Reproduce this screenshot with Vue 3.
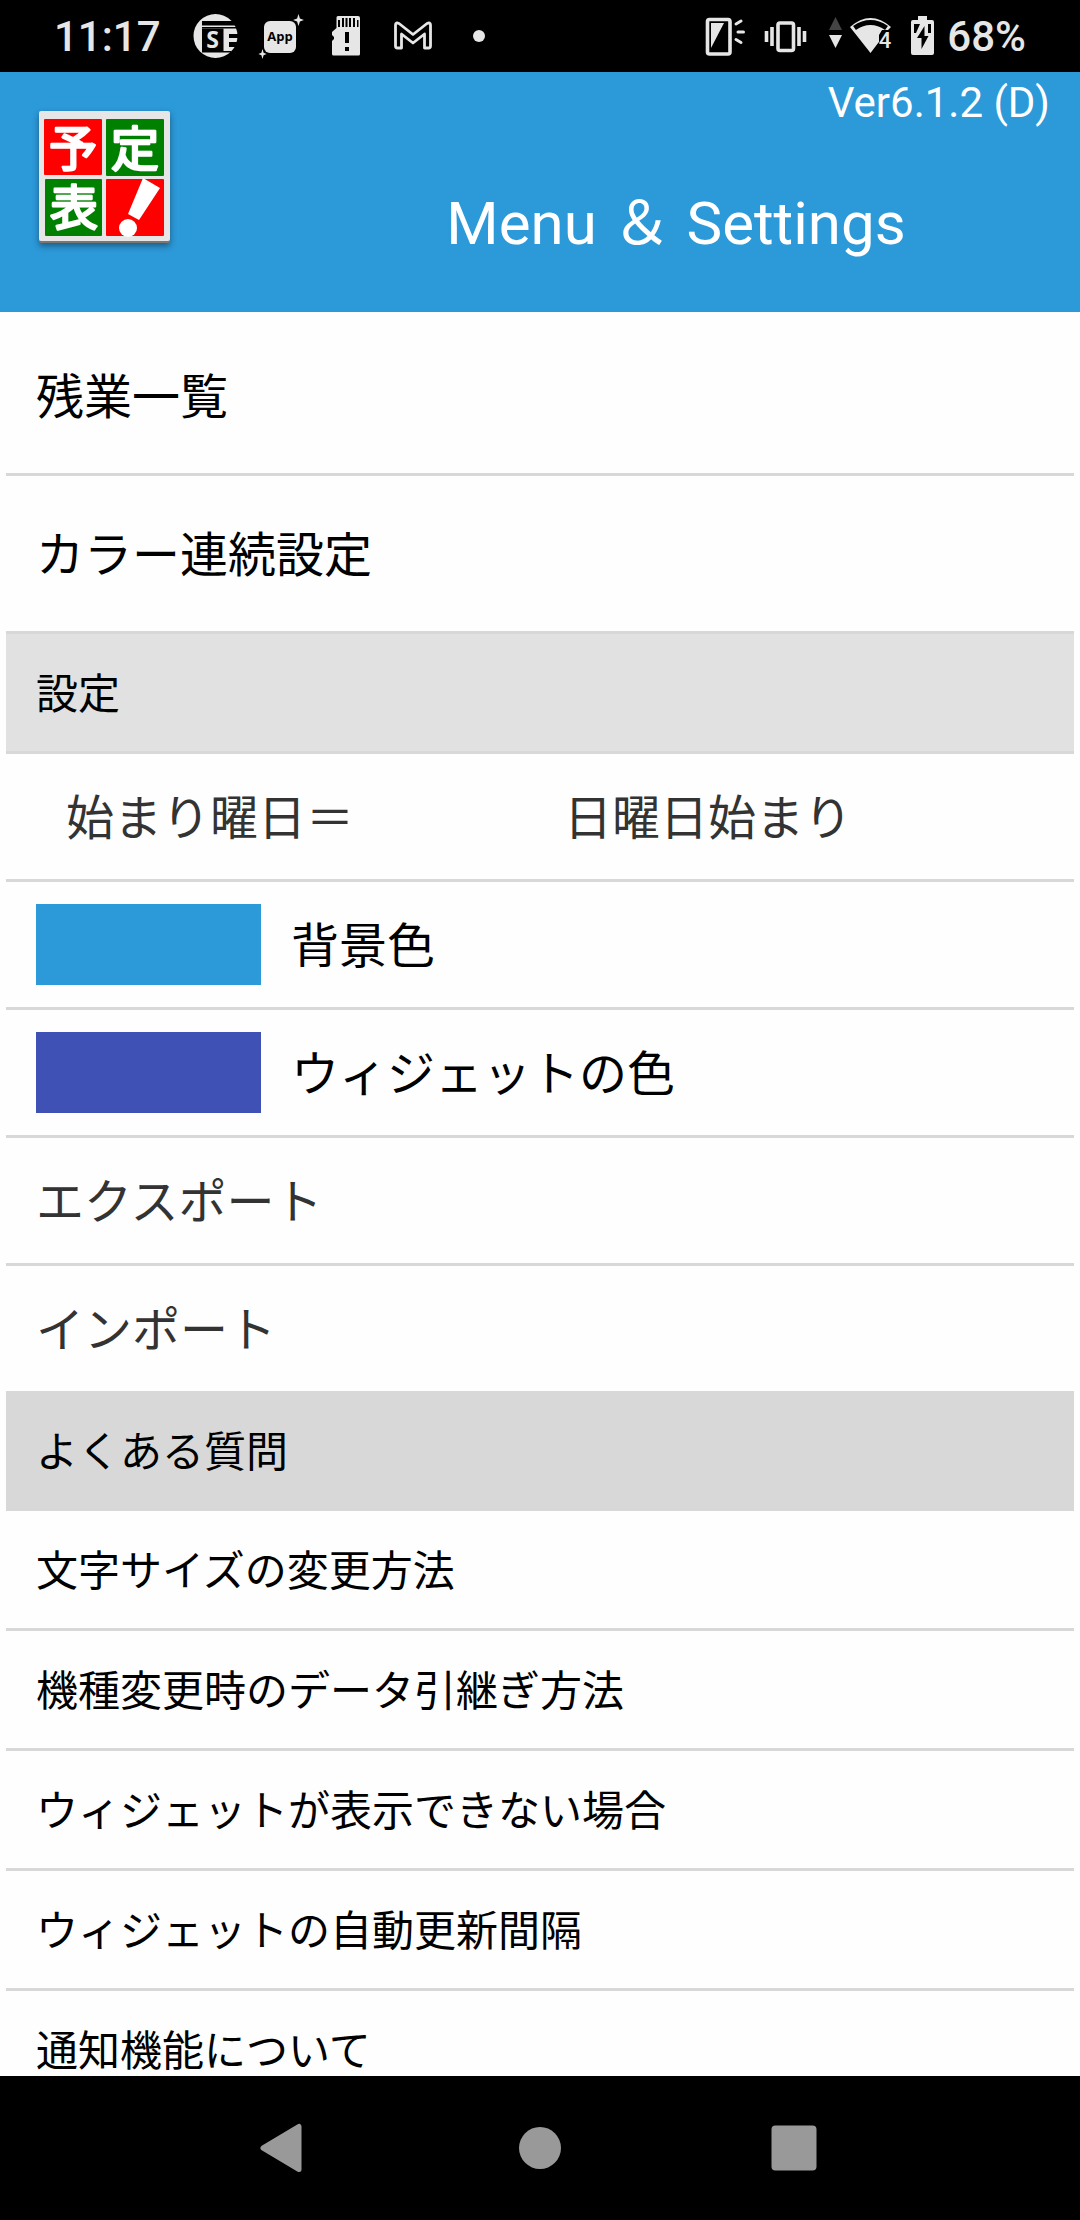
<script setup>
import { ref } from 'vue'

const shortcuts = ['残業一覧', 'カラー連続設定']

const weekStart = ref('日曜日始まり')
const weekStarts = ['日曜日始まり', '月曜日始まり']

const colors = [
  { name: '背景色', value: '#2c99d9' },
  { name: 'ウィジェットの色', value: '#3f51b5' },
]

const transfers = ['エクスポート', 'インポート']

const questions = [
  '文字サイズの変更方法',
  '機種変更時のデータ引継ぎ方法',
  'ウィジェットが表示できない場合',
  'ウィジェットの自動更新間隔',
  '通知機能について',
]
</script>

<template>
  <div class="screen">
    <div class="status">
      <span class="time">11:17</span>
      <svg width="66" height="72" viewBox="183 0 66 72" aria-hidden="true">
        <circle cx="215.500" cy="36" r="22" fill="#e6e6e6" />
        <path d="M202 21h33v4.500h-33zM202 27h36v1.500h-36zM229 34h13v4h-13zM229 42h13v5h-13zM202 51h29v1.500h-29zM237 20h5v8h-5z" fill="#000" />
        <rect x="202" y="28.500" width="21.500" height="22.500" fill="#000" />
        <text x="212.500" y="48" class="glyph" font-size="23" text-anchor="middle" fill="#e6e6e6">S</text>
      </svg>
      <svg width="66" height="72" viewBox="249 0 66 72" aria-hidden="true">
        <rect x="264" y="21" width="32" height="32" rx="6" fill="#e6e6e6" />
        <path d="M298.500 14l1.400 4.600 4 1.400-4 1.400-1.400 4.600-1.400-4.600-4-1.400 4-1.400zM262.500 49l1.100 3.800 3 1.200-3 1.200-1.100 3.800-1.100-3.800-3-1.200 3-1.200z" fill="#e6e6e6" />
        <text x="280" y="41" class="glyph" font-size="13" text-anchor="middle" fill="#000">App</text>
      </svg>
      <svg width="66" height="72" viewBox="315 0 66 72" aria-hidden="true">
        <path d="M338 16h20q2 0 2 2v36q0 1.500-1.500 1.500h-25q-1.500 0-1.500-1.500V41l2-2v-2l-2-2v-3l4.500-4V17.500q0-1.500 1.500-1.500z" fill="#e6e6e6" />
        <path d="M338 20h2v7h-2zM342 18h2v9h-2zM345.500 18h2v9h-2zM349 18h2v9h-2zM353 18h2v9h-2zM357 20h1.500v7H357zM345 32h4v11h-4zM345 47h4v4h-4z" fill="#000" />
      </svg>
      <svg width="66" height="72" viewBox="381 0 66 72" aria-hidden="true">
        <path d="M395.500 46V25q0-3 3.500-1.500L413 34.500 427 23.500q3.500-1.500 3.500 1.500v21q0 2-2 2h-4V34L413 43l-11.500-9v14h-4q-2 0-2-2z" fill="none" stroke="#e6e6e6" stroke-width="2.800" stroke-linejoin="round" />
      </svg>
      <svg width="66" height="72" viewBox="447 0 66 72" aria-hidden="true">
        <circle cx="479" cy="36" r="6" fill="#e6e6e6" />
      </svg>

      <span class="spacer"></span>

      <svg width="54" height="72" viewBox="700 0 54 72" aria-hidden="true">
        <rect x="708.500" y="19.500" width="22.500" height="34.500" rx="2" fill="none" stroke="#e6e6e6" stroke-width="3.600" />
        <path d="M712 23h13l-13 25z" fill="#e6e6e6" />
        <path d="M737 24l5-3M739 32h5.500M737 39.500l5 3" fill="none" stroke="#e6e6e6" stroke-width="3" stroke-linecap="round" />
      </svg>
      <svg width="64" height="72" viewBox="754 0 64 72" aria-hidden="true">
        <rect x="779" y="23" width="15.500" height="27.500" rx="2" fill="none" stroke="#e6e6e6" stroke-width="3.600" />
        <path d="M767.500 31v11M773 27v19M800 27v19M805.500 31v11" stroke="#e6e6e6" stroke-width="3.600" />
      </svg>
      <svg width="84" height="72" viewBox="818 0 84 72" aria-hidden="true">
        <path d="M830 30l6.500-13 6.500 13z" fill="#444" />
        <path d="M830 35l6.500 13 6.500-13z" fill="#e6e6e6" />
        <path d="M851 27Q871.500 9 892 27l-3 3-17.500 23z" fill="#e6e6e6" />
        <path d="M855.500 28Q871.500 17 887.500 28" fill="none" stroke="#000" stroke-width="5" />
        <path d="M883 30h11l-1 22h-17l4-7V35z" fill="#000" />
        <text x="886" y="48" class="digit" font-size="22" text-anchor="middle" fill="#e6e6e6">4</text>
      </svg>
      <svg width="46" height="72" viewBox="902 0 46 72" aria-hidden="true">
        <path d="M919 16h9v4h5q2 0 2 2v31q0 2-2 2h-19q-2 0-2-2V22q0-2 2-2h5z" fill="#e6e6e6" />
        <path d="M915 24h6l-4 9h-2zM929 24h3v9h-3zM925.500 26v10h4l-7 13v-11h-4.500z" fill="#000" />
      </svg>
      <span>68%</span>
    </div>

    <header class="header">
      <svg class="logo" width="144" height="144" viewBox="0 0 144 144" role="img" aria-label="予定表">
        <rect x="7" y="8" width="131" height="131" rx="2" fill="#777" />
        <rect x="7" y="7" width="131" height="130" rx="2" fill="#e6e6e6" />
        <rect x="12" y="15" width="58" height="56" rx="1" fill="#f00" />
        <rect x="74" y="15" width="58" height="57" rx="1" fill="#008000" />
        <rect x="13" y="75" width="57" height="57" rx="1" fill="#008000" />
        <rect x="74" y="75" width="58" height="57" rx="1" fill="#f00" />
        <g class="mark" font-size="48" text-anchor="middle" fill="#fff" stroke="#fff" stroke-width="2.500" stroke-linejoin="round">
          <text x="41" y="62">予</text>
          <text x="103" y="62">定</text>
          <text x="42" y="121">表</text>
        </g>
        <path d="M111 74l17 10-21 32-11-6z" fill="#fff" />
        <circle cx="96" cy="124" r="9" fill="#fff" />
      </svg>
      <div class="heading">
        <p class="version">Ver6.1.2 (D)</p>
        <h1 class="title">Menu ＆ Settings</h1>
      </div>
    </header>

    <main class="list">
      <button v-for="item in shortcuts" :key="item" type="button" class="row tall">
        <span class="label">{{ item }}</span>
      </button>

      <h2 class="row compact section"><span class="label">設定</span></h2>

      <div class="row setting soft">
        <label class="label week-label" for="week-start">始まり曜日＝</label>
        <select id="week-start" v-model="weekStart" class="label week-select">
          <option v-for="option in weekStarts" :key="option">{{ option }}</option>
        </select>
      </div>
      <button v-for="color in colors" :key="color.name" type="button" class="row setting">
        <span class="swatch" :style="{ backgroundColor: color.value }"></span>
        <span class="label">{{ color.name }}</span>
      </button>
      <button v-for="item in transfers" :key="item" type="button" class="row setting soft">
        <span class="label">{{ item }}</span>
      </button>

      <h2 class="row compact faq"><span class="label">よくある質問</span></h2>

      <a v-for="item in questions" :key="item" href="#" class="row compact">
        <span class="label">{{ item }}</span>
      </a>
    </main>

    <nav class="navbar">
      <button type="button" class="nav-button" aria-label="戻る">
        <svg width="60" height="60" viewBox="0 0 60 60">
          <path d="M43 8.500v43L7 30z" fill="#999" stroke="#999" stroke-width="5" stroke-linejoin="round" />
        </svg>
      </button>
      <button type="button" class="nav-button" aria-label="ホーム">
        <svg width="60" height="60" viewBox="0 0 60 60"><circle cx="30" cy="30" r="21" fill="#999" /></svg>
      </button>
      <button type="button" class="nav-button" aria-label="履歴">
        <svg width="60" height="60" viewBox="0 0 60 60"><rect x="7.500" y="7.500" width="45" height="45" rx="4" fill="#999" /></svg>
      </button>
    </nav>
  </div>
</template>

<style>
body {
  margin: 0;
}
</style>

<style scoped>
.screen {
  display: flex;
  flex-direction: column;
  height: 100vh;
  background: #fefefe;
  font-family: Roboto, "Noto Sans CJK JP", sans-serif;
}

.status {
  display: flex;
  flex: none;
  align-items: center;
  height: 72px;
  padding: 0 54px;
  background: #000;
  color: #e6e6e6;
  font-size: 42px;
  font-weight: 500;
}

.time {
  min-width: 129px;
}

.spacer {
  flex: 1;
}

.glyph {
  font-family: "Open Sans", sans-serif;
  font-weight: 700;
}

.digit {
  font-family: Roboto, sans-serif;
  font-weight: 500;
}

.header {
  display: flex;
  flex: none;
  box-sizing: border-box;
  height: 240px;
  padding-left: 32px;
  background: #2c99d9;
  color: #fff;
}

.logo {
  flex: none;
  margin-top: 32px;
  filter: drop-shadow(0 3px 3px rgba(0, 0, 0, 0.4));
}

.mark {
  font-family: "Noto Sans CJK JP", sans-serif;
  font-weight: 400;
}

.heading {
  flex: 1;
}

.version {
  margin: 0;
  padding: 5px 30px 0 0;
  font-size: 42px;
  line-height: 52px;
  text-align: right;
}

.title {
  margin: 0;
  padding: 59px 0 0 96px;
  font-size: 60px;
  font-weight: 400;
  line-height: 72px;
  text-align: center;
}

.list {
  flex: 1;
  min-height: 0;
  padding: 6px 6px 0;
  overflow-y: auto;
  scrollbar-width: none;
}

.row {
  display: flex;
  align-items: center;
  box-sizing: border-box;
  width: 100%;
  margin: 0;
  padding: 0 30px;
  border: 0;
  border-bottom: 3px solid #d8d8d8;
  background: none;
  color: #000;
  font-family: "Noto Sans CJK JP", sans-serif;
  font-size: 48px;
  font-weight: 400;
  line-height: 72px;
  text-align: left;
  text-decoration: none;
}

.label {
  padding: 0 0 6px;
}

.tall {
  height: 158px;
}

.setting {
  height: 128px;
}

.compact {
  height: 120px;
  font-size: 42px;
}

.compact .label {
  padding-bottom: 4px;
}

.soft {
  color: #333;
}

.section {
  background: #e1e1e1;
}

.faq {
  height: 117px;
  background: #d8d8d8;
}

.week-label {
  box-sizing: border-box;
  width: 528px;
  padding-left: 30px;
}

.week-select {
  box-sizing: border-box;
  flex: 1;
  height: 78px;
  border: 0;
  appearance: none;
  background: none;
  color: inherit;
  font: inherit;
}

.swatch {
  width: 225px;
  height: 81px;
  margin-right: 30px;
}

.navbar {
  display: flex;
  flex: none;
  justify-content: center;
  height: 144px;
  background: #000;
}

.nav-button {
  display: flex;
  align-items: center;
  justify-content: center;
  width: 254px;
  padding: 0;
  border: 0;
  background: none;
}
</style>
